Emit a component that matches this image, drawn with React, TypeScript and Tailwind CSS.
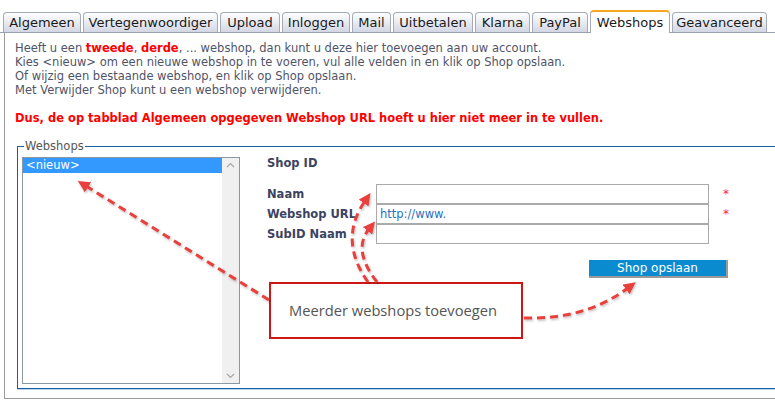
import React from 'react';

const tabs: { label: string; width: number; active?: boolean }[] = [
  { label: 'Algemeen', width: 78 },
  { label: 'Vertegenwoordiger', width: 135 },
  { label: 'Upload', width: 60 },
  { label: 'Inloggen', width: 68 },
  { label: 'Mail', width: 39 },
  { label: 'Uitbetalen', width: 80 },
  { label: 'Klarna', width: 55 },
  { label: 'PayPal', width: 56 },
  { label: 'Webshops', width: 80, active: true },
  { label: 'Geavanceerd', width: 95 },
];

const App: React.FC = () => {
  return (
    <div className="relative w-[775px] h-[403px] overflow-hidden bg-white font-['DejaVu_Sans',Verdana,sans-serif]">
      {/* Tabs */}
      <div className="flex items-end gap-[2px] pl-[3px] pt-[10px] border-b border-[#9aa0ac]">
        {tabs.map((t) =>
          t.active ? (
            <div
              key={t.label}
              style={{ width: t.width }}
              className="h-[23px] -mb-px flex items-center justify-center rounded-t-[4px] border border-b-0 border-[#a4abb8] border-t-2 border-t-[#f5a623] bg-white text-[13px] text-[#1a1a1a]"
            >
              {t.label}
            </div>
          ) : (
            <div
              key={t.label}
              style={{ width: t.width }}
              className="h-[20px] flex items-center justify-center rounded-t-[4px] border border-b-0 border-[#a4abb8] bg-gradient-to-b from-white to-[#d3d7e3] text-[13px] text-[#1a1a1a]"
            >
              {t.label}
            </div>
          )
        )}
      </div>

      {/* Content */}
      <div className="ml-[4px] h-[366px] overflow-hidden border-l border-b border-[#9a9a9a] pl-[10px] pt-[8px]">
        <div className="text-[11.5px] leading-[14px] text-[#4f5468]">
          <p>
            Heeft u een <b className="text-[#ff0000]">tweede</b>, <b className="text-[#ff0000]">derde</b>, ... webshop, dan kunt u deze hier toevoegen aan uw account.
          </p>
          <p>Kies &lt;nieuw&gt; om een nieuwe webshop in te voeren, vul alle velden in en klik op Shop opslaan.</p>
          <p>Of wijzig een bestaande webshop, en klik op Shop opslaan.</p>
          <p>Met Verwijder Shop kunt u een webshop verwijderen.</p>
          <p className="h-[14px]"></p>
          <p className="font-bold text-[#ff0000]">Dus, de op tabblad Algemeen opgegeven Webshop URL hoeft u hier niet meer in te vullen.</p>
        </div>

        <fieldset className="mt-[14px] ml-[2px] -mr-[20px] border border-[#17609f] shadow-[0_1px_0_#b7d3ee] px-[4px] pb-[4px]">
          <legend className="ml-[2px] px-[1px] text-[11.5px] leading-[14px] text-[#555]">Webshops</legend>
          <div className="flex">
            {/* Listbox */}
            <div className="mt-[4px] flex w-[218px] h-[227px] border border-[#8c97a6] bg-white">
              <div className="flex-1">
                <div className="h-[15px] bg-[#3399ff] pl-[3px] text-[11.5px] leading-[15px] text-white">&lt;nieuw&gt;</div>
              </div>
              <div className="w-[17px] flex flex-col items-center justify-between bg-[#f0f0f0] py-[4px]">
                <svg width="9" height="6" viewBox="0 0 9 6">
                  <path d="M1 5 L4.5 1.5 L8 5" fill="none" stroke="#a6a6a6" strokeWidth="1.2" />
                </svg>
                <svg width="9" height="6" viewBox="0 0 9 6">
                  <path d="M1 1 L4.5 4.5 L8 1" fill="none" stroke="#a6a6a6" strokeWidth="1.2" />
                </svg>
              </div>
            </div>

            {/* Form */}
            <div className="ml-[27px] mt-[4px] text-[11.5px] font-bold text-[#3c4360]">
              <div className="h-[13px] leading-[13px]">Shop ID</div>
              <div className="mt-[14px] flex flex-col">
                {[
                  { label: 'Naam', value: '', req: true },
                  { label: 'Webshop URL', value: 'http://www.', req: true },
                  { label: 'SubID Naam', value: '', req: false },
                ].map((f) => (
                  <div key={f.label} className="flex items-center h-[20px]">
                    <div className="w-[109px] leading-[20px]">{f.label}</div>
                    <div className="w-[333px] h-[20px] border border-[#aaaaaa] bg-white pl-[3px] text-[11.5px] font-normal leading-[18px] text-[#1f72c4]">
                      {f.value}
                    </div>
                    {f.req && <span className="ml-[14px] text-[12px] font-normal text-[#ff2a2a]">*</span>}
                  </div>
                ))}
              </div>
              <div className="mt-[16px] ml-[322px]">
                <div className="w-[139px] h-[18px] flex items-center justify-center bg-[#0a8bd0] border-r-2 border-b-2 border-[#9a9a9a] text-[12px] font-normal text-white">
                  Shop opslaan
                </div>
              </div>
            </div>
          </div>
        </fieldset>
      </div>

      {/* Annotation callout */}
      <div className="absolute left-[269px] top-[282px] w-[254px] h-[57px] border-2 border-[#d01515] bg-white flex items-center pl-[18px] font-['Open_Sans',sans-serif] text-[14.7px] text-[#555]">
        Meerder webshops toevoegen
      </div>

      {/* Annotation arrows */}
      <svg className="absolute inset-0 pointer-events-none" width="775" height="403" viewBox="0 0 775 403">
        <defs>
          <marker id="ah" viewBox="0 0 10 10" refX="2" refY="5" markerWidth="4" markerHeight="4" orient="auto" markerUnits="strokeWidth">
            <path d="M0 0 L10 5 L0 10 Z" fill="#e8403e" />
          </marker>
          <filter id="sh" x="-10%" y="-10%" width="120%" height="120%">
            <feDropShadow dx="1" dy="1.5" stdDeviation="1" floodColor="#000" floodOpacity="0.25" />
          </filter>
        </defs>
        <g fill="none" stroke="#e8403e" strokeWidth="3" strokeDasharray="8 5" filter="url(#sh)">
          <path d="M269 300 L86 186" markerEnd="url(#ah)" />
          <path d="M368 282 Q338 240 365 201" markerEnd="url(#ah)" />
          <path d="M377 282 Q352 250 369 229" markerEnd="url(#ah)" />
          <path d="M524 318 C565 319 598 310 628 288" markerEnd="url(#ah)" />
        </g>
      </svg>
    </div>
  );
};

export default App;
